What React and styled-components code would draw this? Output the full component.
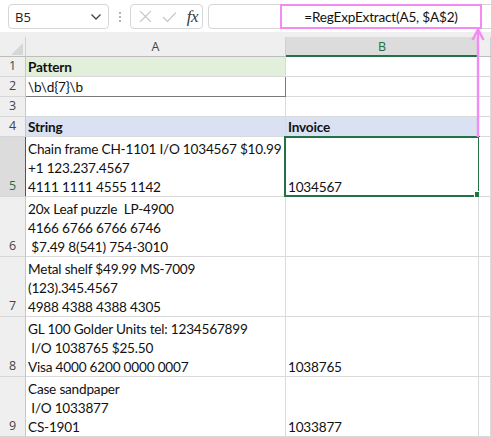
import styled, { createGlobalStyle } from "styled-components";

const Global = createGlobalStyle`
  html, body {
    margin: 0;
    padding: 0;
    background: #ffffff;
    overflow: hidden;
  }
  #root {
    width: 491px;
    height: 437px;
    overflow: hidden;
  }
`;

const Page = styled.div`
  position: relative;
  width: 491px;
  height: 437px;
  overflow: hidden;
  background: #ffffff;
  font-family: "Lato", "Liberation Sans", sans-serif;
`;

const Toolbar = styled.div`
  display: flex;
  align-items: flex-start;
  height: 32px;
  padding: 4px 0 0 8px;
  box-sizing: border-box;
  background: #ffffff;

  & > * {
    flex-shrink: 0;
  }
`;

const NameBox = styled.div`
  width: 101px;
  height: 25px;
  box-sizing: border-box;
  border: 1px solid #d6d6d6;
  border-radius: 4px;
  display: flex;
  align-items: center;
  justify-content: space-between;
  padding: 0 6px 0 6px;
  font-family: "Open Sans", "Noto Sans", sans-serif;
  font-size: 13px;
  color: #222;
`;

const Dots = styled.div`
  width: 21px;
  height: 25px;
  display: flex;
  flex-direction: column;
  align-items: center;
  justify-content: center;
  gap: 2px;

  span {
    width: 2px;
    height: 2px;
    background: #9a9a9a;
    border-radius: 1px;
  }
`;

const ButtonBox = styled.div`
  width: 73px;
  height: 25px;
  box-sizing: border-box;
  border: 1px solid #d6d6d6;
  border-radius: 4px;
  display: flex;
  align-items: center;
  padding: 0 4px 0 8px;
  gap: 10px;
`;

const Fx = styled.span`
  margin-left: auto;
  font-family: "Liberation Serif", serif;
  font-style: italic;
  font-size: 17px;
  color: #3a3a3a;
  letter-spacing: -0.5px;
`;

const FormulaBox = styled.div`
  margin-left: 5px;
  width: 300px;
  height: 25px;
  box-sizing: border-box;
  border: 1px solid #d6d6d6;
  border-radius: 4px;
  display: flex;
  align-items: stretch;
  padding-left: 71px;
`;

const Callout = styled.div`
  width: 202px;
  margin: -1px 0;
  box-sizing: border-box;
  border: 2px solid #f58af5;
  display: flex;
  align-items: center;
  justify-content: center;
  font-size: 13.6px;
  letter-spacing: -0.2px;
  color: #111;
`;

const HeaderStrip = styled.div`
  display: grid;
  grid-template-columns: 26px 260px 193px 1fr;
  height: 25px;
  padding-top: 5px;
  box-sizing: border-box;
  background: #efefef;
  border-bottom: 1px solid #bdbdbd;
`;

const Corner = styled.div`
  border-right: 1px solid #d0d0d0;
  position: relative;

  &::after {
    content: "";
    position: absolute;
    right: 2px;
    bottom: 1px;
    width: 0;
    height: 0;
    border-left: 12px solid transparent;
    border-bottom: 12px solid #d6d6d6;
  }
`;

const ColHead = styled.div`
  display: flex;
  align-items: center;
  justify-content: center;
  font-family: "Open Sans", "Noto Sans", sans-serif;
  font-size: 12.5px;
  border-right: 1px solid #d0d0d0;
  box-sizing: border-box;
  color: ${(p) => (p.$active ? "#1e6e42" : "#444")};
  background: ${(p) => (p.$active ? "#dcdcdc" : "transparent")};
  border-bottom: ${(p) => (p.$active ? "2px solid #217346" : "0")};
  margin-bottom: ${(p) => (p.$active ? "-1px" : "0")};
`;

const Sheet = styled.div`
  display: grid;
  grid-template-columns: 26px 260px 193px 1fr;
`;

const RowHead = styled.div`
  height: ${(p) => p.$h}px;
  box-sizing: border-box;
  display: flex;
  align-items: flex-end;
  justify-content: center;
  padding-bottom: 1px;
  font-family: "Open Sans", "Noto Sans", sans-serif;
  font-size: 12.5px;
  line-height: 18px;
  color: ${(p) => (p.$active ? "#1e6e42" : "#444")};
  background: ${(p) => (p.$active ? "#dcdcdc" : "#efefef")};
  border-bottom: 1px solid #d6d6d6;
  border-right: ${(p) => (p.$active ? "2px solid #217346" : "1px solid #c6c6c6")};
  margin-right: ${(p) => (p.$active ? "-1px" : "0")};
`;

const Cell = styled.div`
  position: relative;
  height: ${(p) => p.$h}px;
  box-sizing: border-box;
  display: flex;
  flex-direction: column;
  justify-content: flex-end;
  padding: 0 0 0 2px;
  font-size: 13.6px;
  letter-spacing: -0.2px;
  line-height: 20px;
  white-space: pre;
  color: #111;
  font-weight: ${(p) => (p.$bold ? 700 : 400)};
  background: ${(p) => p.$fill || "#ffffff"};
  border-bottom: 1px solid ${(p) => (p.$boxed ? "#7a7a7a" : "#dadada")};
  border-right: 1px solid ${(p) => (p.$boxed ? "#7a7a7a" : "#dadada")};
  overflow: visible;

  div {
    height: 20px;
    margin-bottom: -1px;
  }
  div:last-child {
    margin-bottom: 0;
    height: 19px;
  }
`;

const Selected = styled.span`
  position: absolute;
  left: -2px;
  top: -1px;
  right: -2px;
  bottom: -1px;
  border: 2px solid #217346;
  pointer-events: none;

  &::after {
    content: "";
    position: absolute;
    right: -4px;
    bottom: -4px;
    width: 6px;
    height: 6px;
    background: #217346;
    border: 1px solid #fff;
  }
`;

const Arrow = styled.svg`
  position: absolute;
  left: 471px;
  top: 28px;
`;

const rows = [
  { n: 1, h: 20, a: ["Pattern"], b: [], aBold: true, aFill: "#e2efda" },
  { n: 2, h: 20, a: ["\\b\\d{7}\\b"], b: [], boxed: true },
  { n: 3, h: 20, a: [], b: [] },
  { n: 4, h: 20, a: ["String"], b: ["Invoice"], aBold: true, bBold: true, aFill: "#d9e1f2", bFill: "#d9e1f2" },
  { n: 5, h: 60, a: ["Chain frame CH-1101 I/O 1034567 $10.99", "+1 123.237.4567", "4111 1111 4555 1142"], b: ["1034567"], active: true },
  { n: 6, h: 60, a: ["20x Leaf puzzle  LP-4900", "4166 6766 6766 6746", " $7.49 8(541) 754-3010"], b: [] },
  { n: 7, h: 60, a: ["Metal shelf $49.99 MS-7009", "(123).345.4567", "4988 4388 4388 4305"], b: [] },
  { n: 8, h: 60, a: ["GL 100 Golder Units tel: 1234567899", " I/O 1038765 $25.50", "Visa 4000 6200 0000 0007"], b: ["1038765"] },
  { n: 9, h: 60, a: ["Case sandpaper", " I/O 1033877", "CS-1901"], b: ["1033877"] },
];

function Lines({ items }) {
  return items.map((t, i) => <div key={i}>{t}</div>);
}

export default function App() {
  return (
    <Page>
      <Global />
      <Toolbar>
        <NameBox>
          <span>B5</span>
          <svg width="12" height="8" viewBox="0 0 12 8">
            <path d="M1.5 1.5 L6 6 L10.5 1.5" fill="none" stroke="#444" strokeWidth="1.3" />
          </svg>
        </NameBox>
        <Dots>
          <span />
          <span />
          <span />
        </Dots>
        <ButtonBox>
          <svg width="13" height="13" viewBox="0 0 13 13">
            <path d="M1 1 L12 12 M12 1 L1 12" stroke="#c4c4c4" strokeWidth="1.2" fill="none" />
          </svg>
          <svg width="15" height="12" viewBox="0 0 15 12">
            <path d="M1 6 L5.5 10.5 L14 1.5" stroke="#c4c4c4" strokeWidth="1.2" fill="none" />
          </svg>
          <Fx>fx</Fx>
        </ButtonBox>
        <FormulaBox>
          <Callout>=RegExpExtract(A5, $A$2)</Callout>
        </FormulaBox>
      </Toolbar>

      <HeaderStrip>
        <Corner />
        <ColHead>A</ColHead>
        <ColHead $active>B</ColHead>
        <ColHead />
      </HeaderStrip>

      <Sheet>
        {rows.map((r) => [
          <RowHead key={`h${r.n}`} $h={r.h} $active={r.active}>
            {r.n}
          </RowHead>,
          <Cell key={`a${r.n}`} $h={r.h} $bold={r.aBold} $fill={r.aFill} $boxed={r.boxed}>
            <Lines items={r.a} />
          </Cell>,
          <Cell key={`b${r.n}`} $h={r.h} $bold={r.bBold} $fill={r.bFill}>
            <Lines items={r.b} />
            {r.active && <Selected />}
          </Cell>,
          <Cell key={`c${r.n}`} $h={r.h} />,
        ])}
      </Sheet>

      <Arrow width="14" height="110" viewBox="0 0 14 110">
        <path d="M7 1.5 L7 109" stroke="#f58af5" strokeWidth="2.4" fill="none" />
        <path d="M1.5 12 L7 1.5 L12.5 12" stroke="#f58af5" strokeWidth="2.4" fill="none" strokeLinejoin="miter" />
      </Arrow>
    </Page>
  );
}
